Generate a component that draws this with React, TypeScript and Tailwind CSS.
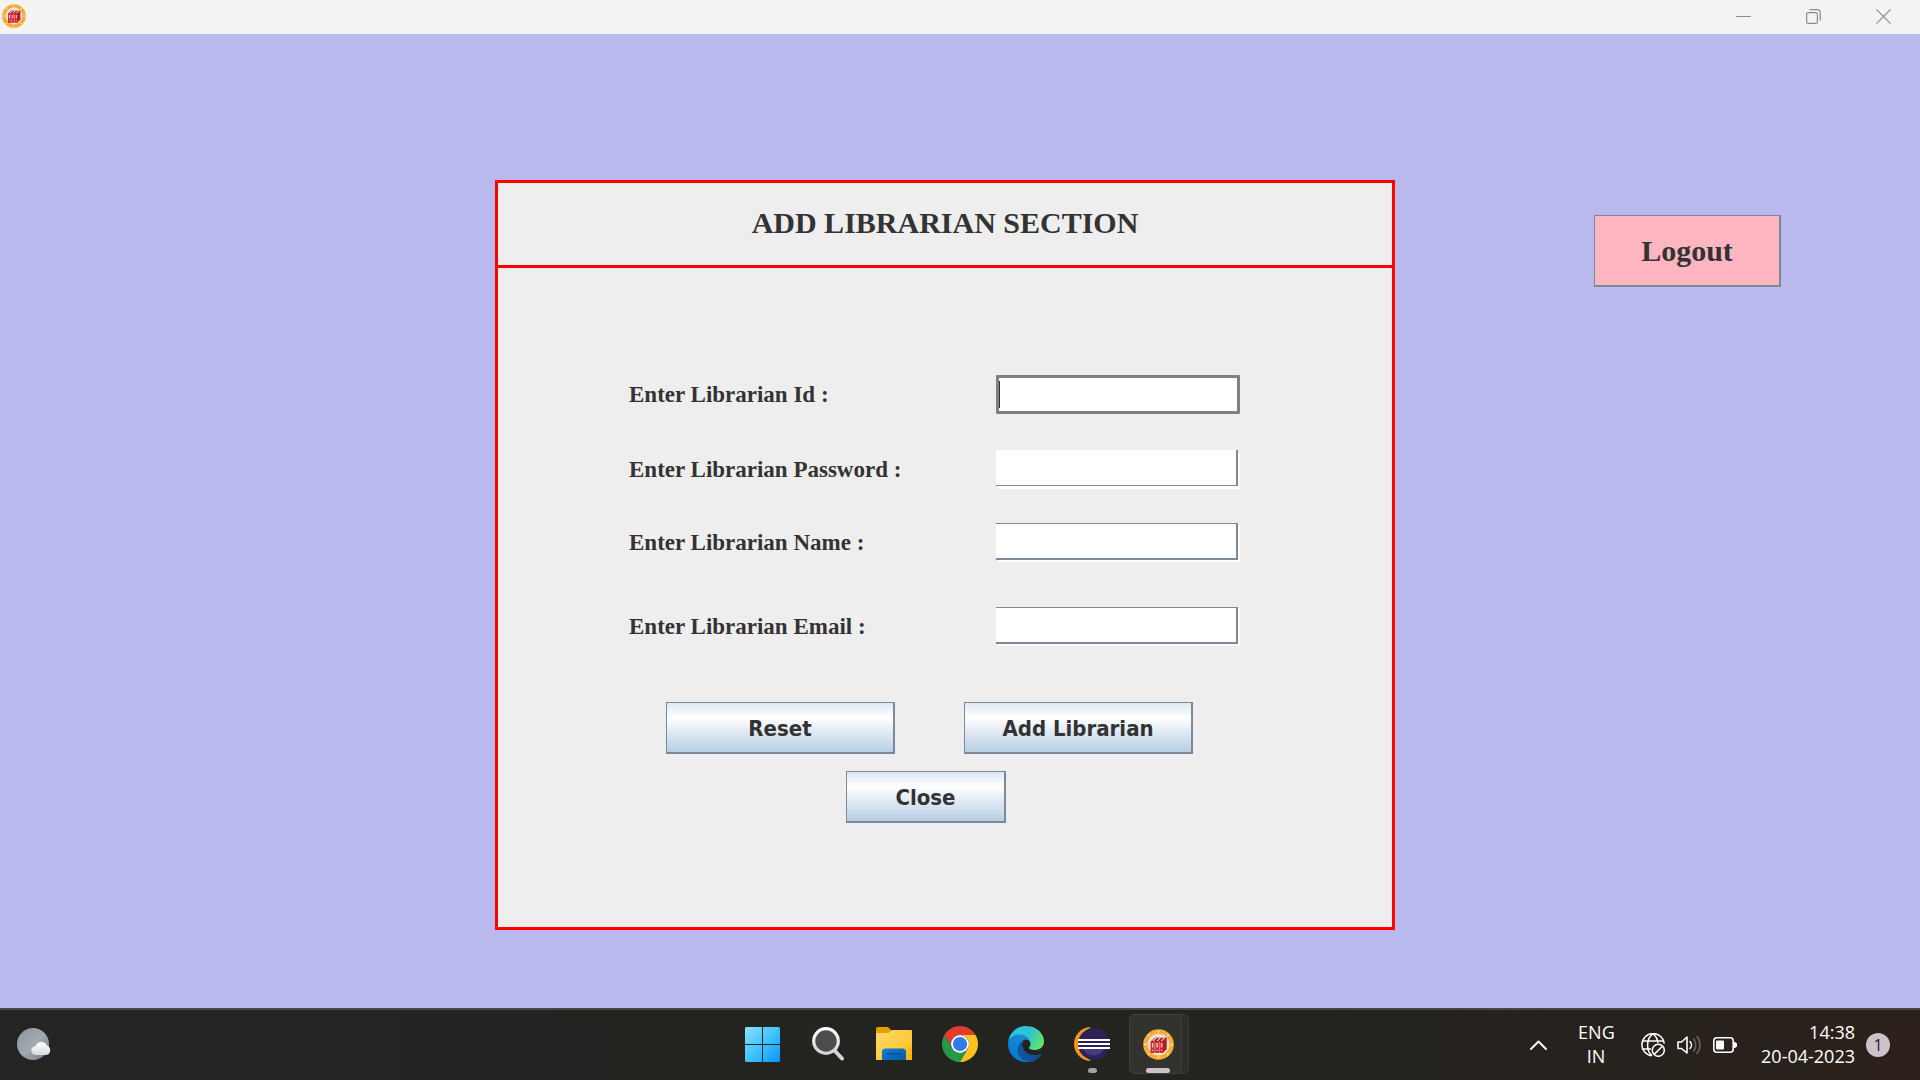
import { ReactNode } from "react";

interface Field {
  id: string;
  label: string;
  type: string;
  className: string;
}

const fields: Field[] = [
  {
    id: "librarian-id",
    label: "Enter Librarian Id :",
    type: "text",
    className: "w-[244px] h-[39px] rounded-[1px] border-[3px] border-[#808080]",
  },
  {
    id: "librarian-password",
    label: "Enter Librarian Password :",
    type: "password",
    className: "w-[242px] h-9 border-r-2 border-b border-[#7a8a99] shadow-[2px_3px_0_#fff]",
  },
  {
    id: "librarian-name",
    label: "Enter Librarian Name :",
    type: "text",
    className: "w-[242px] h-[37px] border-t border-r-2 border-b-2 border-[#7a8a99] shadow-[2px_2px_0_#fff]",
  },
  {
    id: "librarian-email",
    label: "Enter Librarian Email :",
    type: "email",
    className: "w-[242px] h-[37px] border-t border-r-2 border-b-2 border-[#7a8a99] shadow-[2px_2px_0_#fff]",
  },
];

function LibraryIcon({ className }: { className: string }) {
  return (
    <svg viewBox="0 0 32 32" className={className} aria-hidden="true">
      <circle cx="16" cy="16" r="13.5" fill="#e8e4d2" stroke="#fbaa36" strokeWidth="4.6" />
      <g fill="#fff3dc">
        <circle cx="16" cy="2.6" r="0.9" />
        <circle cx="25.8" cy="6" r="0.9" />
        <circle cx="29.6" cy="16" r="1" />
        <circle cx="25.6" cy="26" r="0.9" />
        <circle cx="16" cy="29.4" r="0.9" />
        <circle cx="6" cy="26" r="1" />
        <circle cx="2.4" cy="16" r="1" />
        <circle cx="6" cy="6" r="0.9" />
      </g>
      <path d="M8 13l4-4h12.500V21L20.500 24.500H8z" fill="#a81f26" />
      <path d="M8 13h3.800v11.500H8zM12.600 13h3.800v11.500h-3.800zM17.200 13H21v11.500h-3.800z" fill="#d8232b" />
      <path d="M9.200 14.500h1.500v4.500H9.200zM13.800 14.500h1.500v4.500h-1.500zM18.400 14.500h1.500v4.500h-1.500z" fill="#f2c9c6" />
      <path d="M9.600 12.400l3-3H14l-3 3zM14 12.400l3-3h1.400l-3 3zM18.400 12.400l3-3h1.400l-3 3z" fill="#f4efe4" />
      <path d="M12.200 13v11.500M16.800 13v11.500" stroke="#e8e4d2" strokeWidth="0.6" />
      <path d="M9.400 22h1M14 22h1M18.600 22h1" stroke="#fff" strokeWidth="1" />
    </svg>
  );
}

function TitleBar() {
  return (
    <header className="flex h-[34px] items-center justify-between bg-[#f3f3f3] px-0.5 pb-0.5 text-[#8c8c8c]">
      <LibraryIcon className="h-6 w-6" />
      <div className="flex h-full">
        <button type="button" aria-label="Minimize" className="flex w-[70px] items-center justify-center">
          <svg width="15" height="15" viewBox="0 0 15 15">
            <path d="M0 7.500h15" stroke="currentColor" />
          </svg>
        </button>
        <button type="button" aria-label="Restore" className="flex w-[70px] items-center justify-center">
          <svg width="15" height="15" viewBox="0 0 15 15" fill="none" stroke="currentColor" strokeWidth="1.2">
            <rect x="0.6" y="3.6" width="10.8" height="10.8" rx="1.6" />
            <path d="M3.5 0.7H11a3.3 3.3 0 0 1 3.3 3.3v7.5" />
          </svg>
        </button>
        <button type="button" aria-label="Close window" className="flex w-[70px] items-center justify-center">
          <svg width="15" height="15" viewBox="0 0 15 15">
            <path d="M0.4 0.4l14.2 14.2M14.6 0.4L0.4 14.6" stroke="currentColor" strokeWidth="1.2" />
          </svg>
        </button>
      </div>
    </header>
  );
}

function MetalButton({ children, className }: { children: ReactNode; className: string }) {
  return (
    <button
      type="button"
      className={`${className} h-[52px] border border-r-2 border-b-2 border-[#7a8a99] bg-[linear-gradient(180deg,#dde8f3_0%,#ffffff_30%,#dde8f3_62%,#b8cfe5_100%)] pt-0.5 font-['DejaVu_Sans_Condensed','Noto_Sans',sans-serif] text-[22px] font-bold text-[#333333]`}
    >
      {children}
    </button>
  );
}

function LibrarianForm() {
  return (
    <form className="h-[750px] border-[3px] border-[#ff0000] bg-[#eeeeee] font-['Liberation_Serif',serif] text-[#333333]">
      <h1 className="flex h-[85px] items-center justify-center border-b-[3px] border-[#ff0000] pb-1 text-[30px] font-bold">
        ADD LIBRARIAN SECTION
      </h1>
      <div className="mt-[107px] grid grid-rows-[75px_73px_84px_39px] pl-[131px]">
        {fields.map((field) => (
          <div key={field.id} className="flex h-[39px] items-center">
            <label htmlFor={field.id} className="w-[367px] text-[23px] leading-6 font-bold">
              {field.label}
            </label>
            <div className="relative flex h-full items-start">
              <input
                id={field.id}
                type={field.type}
                className={`${field.className} bg-white px-1 outline-none`}
              />
              {field.id === "librarian-id" && (
                <span className="absolute top-1.5 left-[3px] h-[27px] w-px bg-[#333333]" />
              )}
            </div>
          </div>
        ))}
      </div>
      <div className="mt-14 flex gap-[69px] pl-[168px]">
        <MetalButton className="w-[229px]">Reset</MetalButton>
        <MetalButton className="w-[229px]">Add Librarian</MetalButton>
      </div>
      <div className="mt-[17px] flex pl-[348px]">
        <MetalButton className="w-40">Close</MetalButton>
      </div>
    </form>
  );
}

function StartIcon() {
  return (
    <svg width="35" height="35" viewBox="0 0 35 35">
      <defs>
        <linearGradient id="start" x1="0" y1="0" x2="1" y2="1">
          <stop offset="0" stopColor="#8be0ff" />
          <stop offset="0.5" stopColor="#3fc4fd" />
          <stop offset="1" stopColor="#0a94fb" />
        </linearGradient>
      </defs>
      <path
        d="M1.5 0H17v17H0V1.5A1.5 1.5 0 0 1 1.5 0zM18 0h15.500A1.500 1.500 0 0 1 35 1.500V17H18zM0 18h17v17H1.500A1.500 1.500 0 0 1 0 33.500zM18 18h17v15.500a1.500 1.500 0 0 1-1.500 1.500H18z"
        fill="url(#start)"
      />
    </svg>
  );
}

function SearchIcon() {
  return (
    <svg width="34" height="36" viewBox="0 0 34 36">
      <defs>
        <linearGradient id="lens" x1="0" y1="0" x2="0" y2="1">
          <stop offset="0" stopColor="#ffffff" />
          <stop offset="1" stopColor="#cfd4d8" />
        </linearGradient>
      </defs>
      <path d="M23.500 24.500l7.500 8" stroke="#d3d7da" strokeWidth="4" strokeLinecap="round" />
      <circle cx="15" cy="15" r="12.300" fill="#4c4c4b" stroke="url(#lens)" strokeWidth="3.200" />
    </svg>
  );
}

function FolderIcon() {
  return (
    <svg width="36" height="34" viewBox="0 0 36 34">
      <defs>
        <linearGradient id="folder" x1="0" y1="0" x2="1" y2="1">
          <stop offset="0" stopColor="#ffd969" />
          <stop offset="0.6" stopColor="#fdca3f" />
          <stop offset="1" stopColor="#f8b007" />
        </linearGradient>
        <linearGradient id="folder-tray" x1="0" y1="0" x2="1" y2="1">
          <stop offset="0" stopColor="#0f7fd3" />
          <stop offset="1" stopColor="#0659a8" />
        </linearGradient>
      </defs>
      <path d="M0 1.500A1.500 1.500 0 0 1 1.500 0H12l3.500 3.500V8H0z" fill="#dfa000" />
      <path d="M0 6h12.500L16 3h19a1 1 0 0 1 1 1v29H0z" fill="url(#folder)" />
      <path d="M6 33v-8a3.500 3.500 0 0 1 3.500-3.500h17A3.500 3.500 0 0 1 30 25v8z" fill="url(#folder-tray)" />
      <path d="M11 27h14" stroke="#094f8c" strokeWidth="1.600" strokeLinecap="round" />
    </svg>
  );
}

function ChromeIcon() {
  return (
    <svg width="36" height="36" viewBox="0 0 48 48">
      <path d="M3.220 12A24 24 0 0 1 44.780 12H24A12 12 0 0 0 13.600 30z" fill="#e33b2e" />
      <path d="M44.780 12A24 24 0 0 1 24 48l10.400-18A12 12 0 0 0 24 12z" fill="#fcc31e" />
      <path d="M24 48A24 24 0 0 1 3.220 12L13.600 30a12 12 0 0 0 20.800 0z" fill="#279847" />
      <circle cx="24" cy="24" r="12" fill="#ffffff" />
      <circle cx="24" cy="24" r="9.500" fill="#2f7be9" />
    </svg>
  );
}

function EdgeIcon() {
  return (
    <svg width="36" height="36" viewBox="0 0 256 256">
      <defs>
        <linearGradient id="edge-deep" x1="0" y1="0" x2="1" y2="0">
          <stop offset="0" stopColor="#0c59a4" />
          <stop offset="1" stopColor="#114a8b" />
        </linearGradient>
        <linearGradient id="edge-mid" x1="0.7" y1="0.2" x2="0.2" y2="1">
          <stop offset="0" stopColor="#1b8ad0" />
          <stop offset="1" stopColor="#0078d8" />
        </linearGradient>
        <linearGradient id="edge-top" x1="0" y1="0.3" x2="1" y2="0.7">
          <stop offset="0" stopColor="#35c1f1" />
          <stop offset="0.5" stopColor="#2bc3cf" />
          <stop offset="1" stopColor="#66e85c" />
        </linearGradient>
      </defs>
      <path
        d="M235.7 195.5a93.7 93.7 0 0 1-10.6 4.7 101.9 101.9 0 0 1-35.9 6.4c-47.3 0-88.5-32.5-88.5-74.3a31.5 31.5 0 0 1 16.4-27.3c-42.8 1.8-53.8 46.4-53.8 72.5 0 74 68.1 81.4 82.8 81.4 7.9 0 19.8-2.3 27-4.6l1.3-.4a128.300 128.300 0 0 0 66.6-52.8 4 4 0 0 0-5.300-5.600z"
        fill="url(#edge-deep)"
      />
      <path
        d="M105.7 241.4a79.2 79.2 0 0 1-22.7-21.3 80.7 80.7 0 0 1 29.5-120c3.2-1.5 8.5-4.1 15.6-4a32.4 32.4 0 0 1 25.7 13 31.9 31.9 0 0 1 6.3 18.7c0-.2 24.5-79.6-80-79.6-43.9 0-80 41.6-80 78.2a130.2 130.2 0 0 0 12.1 56 128 128 0 0 0 156.4 67.1 75.5 75.5 0 0 1-62.8-8z"
        fill="url(#edge-mid)"
      />
      <path
        d="M152.3 148.9c-.9 1-3.4 2.5-3.4 5.6 0 2.6 1.7 5.2 4.8 7.3 14.4 10.1 41.7 8.7 41.8 8.7a59.6 59.6 0 0 0 30.3-8.3 61.4 61.4 0 0 0 30.4-52.9c.3-22.4-8-37.3-11.3-43.9C223.7 24 178 0 128 0A128 128 0 0 0 0 126.2c.5-36.5 36.8-66 80-66 3.5 0 23.5.3 42 10a72.6 72.6 0 0 1 30.9 29.3c6.1 10.6 7.2 24.1 7.2 29.5 0 5.4-2.7 13.3-7.8 19.900z"
        fill="url(#edge-top)"
      />
    </svg>
  );
}

function EclipseIcon() {
  return (
    <svg width="36" height="36" viewBox="0 0 36 36">
      <path d="M17 1A17 17 0 0 0 17 35A21 21 0 0 1 17 1z" fill="#f7941e" />
      <circle cx="20" cy="18" r="16" fill="#2c2255" />
      <path d="M9 21h21a10 8 0 0 1-21 0z" fill="#453a83" />
      <path d="M4 14h32M4 18h32M4 22h32" stroke="#ffffff" strokeWidth="2" />
    </svg>
  );
}

function WeatherIcon() {
  return (
    <svg width="36" height="34" viewBox="0 0 36 34">
      <defs>
        <linearGradient id="moon" x1="0" y1="0" x2="1" y2="1">
          <stop offset="0" stopColor="#8b949d" />
          <stop offset="0.5" stopColor="#a1a9b1" />
          <stop offset="1" stopColor="#727b85" />
        </linearGradient>
        <linearGradient id="cloud" x1="0" y1="0" x2="0" y2="1">
          <stop offset="0" stopColor="#ffffff" />
          <stop offset="1" stopColor="#d5dae0" />
        </linearGradient>
      </defs>
      <circle cx="16" cy="16" r="16" fill="url(#moon)" />
      <path
        d="M19 27a4.500 4.500 0 0 1-.5-9 6.300 6.300 0 0 1 11.500-.500 5 5 0 0 1-.500 9.500z"
        fill="url(#cloud)"
      />
    </svg>
  );
}

function TaskItem({ label, children }: { label: string; children: ReactNode }) {
  return (
    <button type="button" aria-label={label} className="relative flex w-[66px] items-center justify-center pb-0.5">
      {children}
    </button>
  );
}

function SystemTray() {
  return (
    <div className="flex items-center justify-end pr-[30px] text-center text-lg leading-6 text-white">
      <button type="button" aria-label="Show hidden icons" className="mr-[31px]">
        <svg width="17" height="10" viewBox="0 0 17 10" fill="none" stroke="currentColor" strokeWidth="2">
          <path d="M1 9l7.500-7.500L16 9" strokeLinecap="round" strokeLinejoin="round" />
        </svg>
      </button>
      <button type="button" className="w-9 pb-0.5">
        ENG
        <br />
        IN
      </button>
      <button type="button" aria-label="Network, volume and battery" className="ml-[27px] flex items-center gap-3">
        <svg width="24" height="24" viewBox="0 0 24 24" fill="none" stroke="currentColor" strokeWidth="1.5">
          <path d="M10.500 22.800A11.200 11.200 0 1 1 23.200 10.500" />
          <path d="M11 22.500C5 18 5 5 12 0.800C15.500 3.500 16.700 7 16.800 10M1.500 8h21M1.500 16H10" />
          <circle cx="17.300" cy="17.300" r="6" />
          <path d="M13.200 21.400l8.200-8.200" />
        </svg>
        <svg width="24" height="24" viewBox="0 0 24 24" fill="none" stroke="currentColor" strokeWidth="1.600">
          <path d="M1 9v6.500h3.500L10 20V4L4.500 9z" strokeLinejoin="round" />
          <path d="M13 8.500a5 5 0 0 1 0 7" strokeLinecap="round" />
          <path d="M16.200 5.500a9.500 9.500 0 0 1 0 13M19.500 3a13.500 13.500 0 0 1 0 18" stroke="#6b6560" />
        </svg>
        <svg width="24" height="24" viewBox="0 0 24 24">
          <rect x="0.8" y="4.800" width="19.400" height="14.400" rx="3" fill="none" stroke="currentColor" strokeWidth="1.600" />
          <rect x="3" y="7.500" width="8" height="9" rx="1" fill="currentColor" />
          <path d="M21 9h1l2 1.500v3L22 15h-1z" fill="currentColor" />
        </svg>
      </button>
      <button type="button" className="ml-6 flex items-center gap-[11px]">
        <span className="pb-[3px] text-right">
          14:38
          <br />
          20-04-2023
        </span>
        <span className="flex h-6 w-6 items-center justify-center rounded-full bg-[#cdc2cb] text-base text-[#1d1a1c]">
          1
        </span>
      </button>
    </div>
  );
}

function Taskbar() {
  return (
    <footer className="grid h-[72px] grid-cols-[1fr_auto_1fr] border-t-2 border-[#484746] bg-[linear-gradient(90deg,#242522_0%,#232320_65%,#26221e_82%,#2c211a_100%)] font-['Open_Sans',sans-serif]">
      <button type="button" aria-label="Weather" className="flex items-center pl-[17px]">
        <WeatherIcon />
      </button>
      <nav className="flex">
        <TaskItem label="Start">
          <StartIcon />
        </TaskItem>
        <TaskItem label="Search">
          <SearchIcon />
        </TaskItem>
        <TaskItem label="File Explorer">
          <FolderIcon />
        </TaskItem>
        <TaskItem label="Chrome">
          <ChromeIcon />
        </TaskItem>
        <TaskItem label="Edge">
          <EdgeIcon />
        </TaskItem>
        <TaskItem label="Eclipse">
          <EclipseIcon />
          <span className="absolute bottom-[7px] h-[5px] w-[9px] rounded-full bg-[#a1a09e]" />
        </TaskItem>
        <TaskItem label="Library Management">
          <span className="absolute top-1 right-0.5 h-[60px] w-10 rounded-md border border-[#3b3b38] bg-[#2c2c29]" />
          <span className="absolute top-1 left-1 h-[60px] w-[53px] rounded-md border border-[#3f3f3c] bg-[#32322f]" />
          <LibraryIcon className="relative h-[31px] w-[31px]" />
          <span className="absolute bottom-[7px] h-[5px] w-6 rounded-full bg-[#cdc2cb]" />
        </TaskItem>
      </nav>
      <SystemTray />
    </footer>
  );
}

export default function App() {
  return (
    <div className="flex min-h-screen flex-col bg-[#bab9ee]">
      <TitleBar />
      <main className="grid flex-1 grid-cols-[495fr_900px_525fr] items-start pt-[146px] pb-[78px]">
        <div className="col-start-2">
          <LibrarianForm />
        </div>
        <div className="flex justify-end pt-[35px] pr-[139px]">
          <button
            type="button"
            className="h-[72px] w-[187px] border border-r-2 border-b-2 border-[#7a8a99] bg-[#ffb6c1] font-['Liberation_Serif',serif] text-[30px] font-bold text-[#333333]"
          >
            Logout
          </button>
        </div>
      </main>
      <Taskbar />
    </div>
  );
}
